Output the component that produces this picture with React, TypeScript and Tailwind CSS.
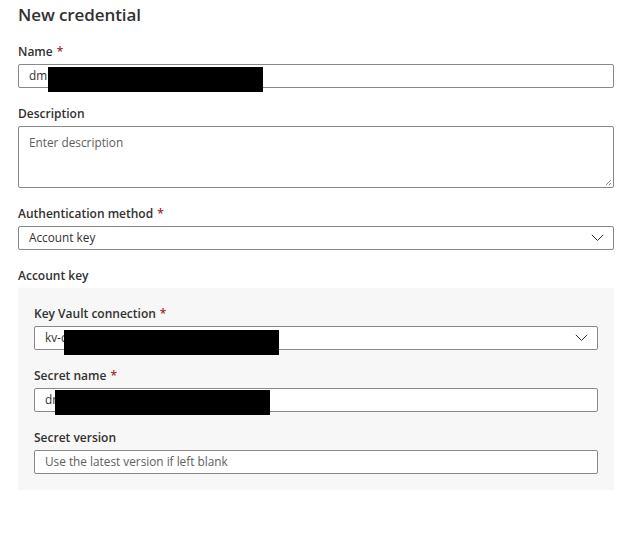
import React from "react";

const font = { fontFamily: '"Open Sans", "Noto Sans", sans-serif' };

function Chevron() {
  return (
    <svg width="13" height="8" viewBox="0 0 13 8" className="shrink-0">
      <path d="M0.8 0.8 L6.5 6.5 L12.2 0.8" fill="none" stroke="#323130" strokeWidth="1" />
    </svg>
  );
}

function Label({ text, required }: { text: string; required?: boolean }) {
  return (
    <div className="text-[12px] font-semibold text-[#323130] leading-[18px] pt-[1px] pb-[3px]">
      {text}
      {required && <span className="text-[#a4262c] ml-1">*</span>}
    </div>
  );
}

function Redact({ className }: { className: string }) {
  return <div className={"absolute bg-black h-[25px] w-[215px] " + className} />;
}

function Field({ value, placeholder, select, redact }: { value?: string; placeholder?: string; select?: boolean; redact?: string }) {
  return (
    <div className="relative h-[24px] bg-white border border-[#8a8886] rounded-[2px] flex items-center pl-[10px] pr-[9px] text-[11.8px]">
      <span className={"flex-1 truncate " + (value ? "text-[#323130]" : "text-[#605e5c]")}>{value ?? placeholder}</span>
      {select && <Chevron />}
      {redact && <Redact className={redact} />}
    </div>
  );
}

export default function App() {
  return (
    <div className="w-[627px] h-[545px] bg-white pl-[18px] pr-[13px] pt-[2px]" style={font}>
      <h1 className="text-[17px] font-semibold text-[#323130] leading-[26px] tracking-[-0.1px]">New credential</h1>

      <div className="mt-[14px]">
        <Label text="Name" required />
        <Field value="dm" redact="left-[29px] top-[2px]" />
      </div>

      <div className="mt-[16px]">
        <Label text="Description" />
        <div className="h-[62px] border border-[#8a8886] rounded-[2px] px-[10px] py-[7px] text-[11.8px] text-[#605e5c] relative">
          Enter description
          <svg width="7" height="7" viewBox="0 0 7 7" className="absolute right-[1px] bottom-[1px]">
            <path d="M6 1 L1 6 M6 4 L4 6" stroke="#8a8886" strokeWidth="1" />
          </svg>
        </div>
      </div>

      <div className="mt-[16px]">
        <Label text="Authentication method" required />
        <Field value="Account key" select />
      </div>

      <div className="mt-[16px]">
        <Label text="Account key" />
        <div className="bg-[#f7f7f7] px-[16px] pt-[16px] pb-[16px]">
          <Label text="Key Vault connection" required />
          <Field value="kv-c" select redact="left-[29px] top-[3px]" />
          <div className="mt-[16px]">
            <Label text="Secret name" required />
            <Field value="dr" redact="left-[20px] top-[1px]" />
          </div>
          <div className="mt-[16px]">
            <Label text="Secret version" />
            <Field placeholder="Use the latest version if left blank" />
          </div>
        </div>
      </div>
    </div>
  );
}
